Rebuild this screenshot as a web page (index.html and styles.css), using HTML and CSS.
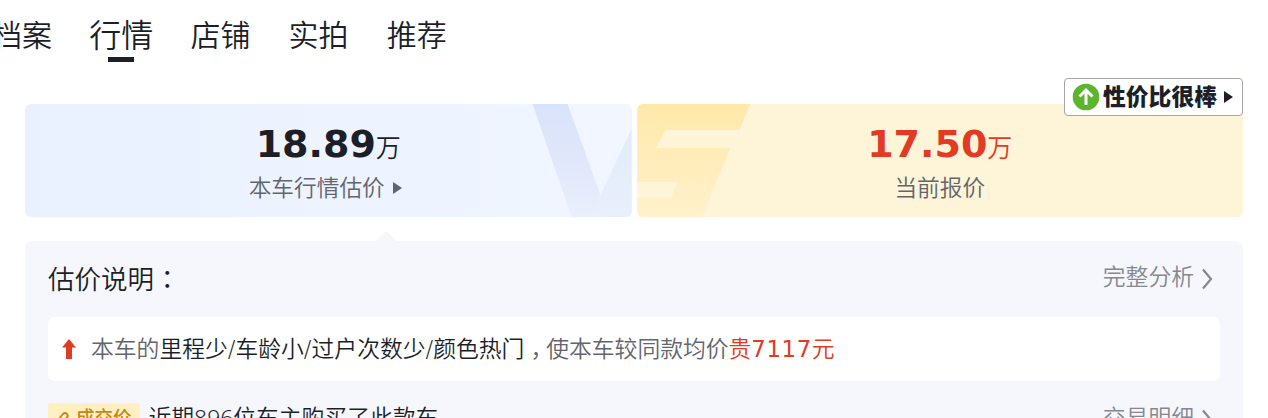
FILE: index.html
```
<!DOCTYPE html>
<html lang="zh-CN">
<head>
    <meta charset="UTF-8">
    <meta name="viewport" content="width=device-width, initial-scale=1.0">
    <title>车辆行情</title>
    <link rel="stylesheet" href="styles.css">
</head>
<body>
    <nav class="tabs">
        <a class="tab">档案</a>
        <a class="tab active">行情</a>
        <a class="tab">店铺</a>
        <a class="tab">实拍</a>
        <a class="tab">推荐</a>
    </nav>

    <div class="price-cards">
        <div class="price-card estimate">
            <svg class="card-bg" viewBox="0 0 607 113">
                <defs>
                    <linearGradient id="blueFade" x1="0" y1="0" x2="0" y2="1">
                        <stop offset="0" stop-color="#d8e3fa"/>
                        <stop offset="0.5" stop-color="#e1e7fa"/>
                        <stop offset="1" stop-color="#e9effc"/>
                    </linearGradient>
                    <linearGradient id="blueFadeSide" x1="0" y1="0" x2="0" y2="1">
                        <stop offset="0" stop-color="#e1ebfa"/>
                        <stop offset="1" stop-color="#e9effc"/>
                    </linearGradient>
                </defs>
                <path d="M508 0H543L576 91L567 113H547Z" fill="url(#blueFade)"/>
                <path d="M576 91L607 25V113H567Z" fill="url(#blueFadeSide)"/>
            </svg>
            <div class="price">18.89<span class="unit">万</span></div>
            <div class="label">本车行情估价<i class="triangle"></i></div>
        </div>
        <div class="price-card offer">
            <svg class="card-bg" viewBox="0 0 606 113">
                <defs>
                    <linearGradient id="yellowFade" x1="0" y1="0" x2="0" y2="1">
                        <stop offset="0" stop-color="#ffe8a9"/>
                        <stop offset="0.6" stop-color="#ffedbd"/>
                        <stop offset="1" stop-color="#fff1cc"/>
                    </linearGradient>
                </defs>
                <path d="M0 0H113L102 26H28L19 44H93L65 113H0V94H34L40 78H0Z" fill="url(#yellowFade)"/>
            </svg>
            <div class="price">17.50<span class="unit">万</span></div>
            <div class="label">当前报价</div>
            <div class="badge">
                <svg width="28" height="28" viewBox="0 0 28 28">
                    <circle cx="14" cy="14" r="13.3" fill="#5db52e"/>
                    <path d="M14 22V8M7.5 13.5L14 7L20.5 13.5" fill="none" stroke="#fff" stroke-width="3"/>
                </svg>
                <span class="badge-text">性价比很棒</span>
                <i class="triangle"></i>
            </div>
        </div>
    </div>

    <section class="panel">
        <div class="panel-header">
            <h3>估价说明<span class="colon" lang="zh-TW">：</span></h3>
            <a class="more">完整分析<svg width="12" height="22" viewBox="0 0 12 22"><path d="M2 1.5L10 11L2 20.5"/></svg></a>
        </div>
        <div class="reason">
            <svg class="up" width="14" height="20" viewBox="0 0 14 20">
                <path d="M7 0L14 8.5H10V20H4V8.5H0Z" fill="#e23a23"/>
            </svg>
            <p>本车的<b>里程少/车龄小/过户次数少/颜色热门</b><span class="comma">，</span>使本车较同款均价<em>贵<span class="num">7117</span>元</em></p>
        </div>
        <div class="deal">
            <span class="tag">
                <svg width="15" height="20" viewBox="0 0 15 20"><path d="M2 14L7 8Q9 6 11 8L12 10L6 17M5 13L9 17" fill="none" stroke="#c08a16" stroke-width="1.8"/></svg>
                成交价
            </span>
            <span class="deal-text">近期896位车主购买了此款车</span>
            <a class="more">交易明细<svg width="12" height="22" viewBox="0 0 12 22"><path d="M2 1.5L10 11L2 20.5"/></svg></a>
        </div>
    </section>
</body>
</html>
```
FILE: styles.css
```
* {
    box-sizing: border-box;
}

body {
    margin: 0;
    height: 418px;
    overflow: hidden;
    background: #fff;
    color: #1c1f28;
    font-family: "Liberation Sans", "Noto Sans CJK SC", sans-serif;
    font-weight: 350;
}

.tabs {
    display: flex;
    align-items: center;
    gap: 38.2px;
    height: 72px;
    margin-left: -8px;
    font-size: 30px;
    line-height: 44px;
}

.tab {
    position: relative;
    white-space: nowrap;
}

.tab.active {
    margin: 0 -1px;
    font-size: 32px;
}

.tab.active::after {
    content: "";
    position: absolute;
    left: 19px;
    top: 43px;
    width: 26px;
    height: 5px;
    background: #1c1f28;
}

.price-cards {
    display: flex;
    gap: 5px;
    margin: 32px 25px 0;
    height: 113px;
}

.price-card {
    position: relative;
    flex: 1;
    padding-top: 16px;
    border-radius: 6px;
    text-align: center;
}

.card-bg {
    position: absolute;
    left: 0;
    top: 0;
    width: 100%;
    height: 100%;
    border-radius: 6px;
}

.estimate {
    background: linear-gradient(90deg, #e9f1ff, #f1f6ff);
}

.offer {
    background: #fef4d8;
}

.price {
    position: relative;
    font: bold 38px/48px "DejaVu Sans", sans-serif;
}

.unit {
    font: 350 25px/30px "Noto Sans CJK SC", sans-serif;
}

.offer .price {
    color: #e23a23;
}

.label {
    position: relative;
    display: flex;
    justify-content: center;
    align-items: center;
    color: #62656d;
    font-size: 22.7px;
    line-height: 40px;
}

.triangle {
    margin-left: 8px;
    border-left: 9px solid currentColor;
    border-top: 6px solid transparent;
    border-bottom: 6px solid transparent;
}

.estimate .label {
    padding-right: 6px;
}

.badge {
    position: absolute;
    right: 0;
    top: -26px;
    display: flex;
    align-items: center;
    width: 179px;
    height: 38px;
    padding-left: 7px;
    border: 1px solid #a3a6ad;
    border-radius: 4px;
    background: #fff;
}

.badge-text {
    margin-left: 3px;
    font-size: 22.8px;
    font-weight: 900;
    line-height: 34px;
    white-space: nowrap;
}

.badge .triangle {
    margin-left: 7px;
}

.panel {
    position: relative;
    height: 177px;
    margin: 24px 25px 0;
    padding: 0 23px;
    border-radius: 8px 8px 0 0;
    background: #f5f7fc;
}

.panel::before {
    content: "";
    position: absolute;
    left: 350px;
    top: -10px;
    border: 11px solid transparent;
    border-top: 0;
    border-bottom: 10px solid #f5f7fc;
}

.panel-header {
    display: flex;
    justify-content: space-between;
    height: 76px;
}

.panel-header h3 {
    margin: 0;
    font-size: 26.5px;
    font-weight: 350;
    line-height: 78px;
}

.colon {
    font-family: "Noto Sans CJK TC", sans-serif;
    line-height: 1;
}

.comma {
    padding-left: 6px;
    margin-right: -7px;
}

.more {
    display: flex;
    align-items: center;
    gap: 7px;
    height: 69px;
    margin-right: 7px;
    color: #85888f;
    font-size: 22.8px;
}

.more svg {
    margin-top: 7px;
    fill: none;
    stroke: #85888f;
    stroke-width: 2.2;
}

.reason {
    display: flex;
    align-items: center;
    height: 64px;
    padding-left: 14px;
    border-radius: 7px;
    background: #fff;
}

.reason p {
    margin: 0 0 0 15px;
    color: #62656d;
    font-family: "DejaVu Sans", "Noto Sans CJK SC", sans-serif;
    font-size: 22.8px;
    line-height: 40px;
    white-space: nowrap;
}

.reason b {
    color: #1c1f28;
    font-weight: 350;
}

.reason em {
    color: #e23a23;
    font-style: normal;
}

.num {
    font-weight: 400;
    letter-spacing: 0.6px;
}

.deal {
    display: flex;
    align-items: center;
    height: 70px;
}

.tag {
    display: flex;
    align-items: center;
    gap: 5px;
    height: 26px;
    padding: 0 8px;
    border-radius: 3px;
    background: #ffefc1;
    color: #c08a16;
    font-size: 18.5px;
    font-weight: 500;
}

.deal-text {
    margin: 3px 0 0 9px;
    font-family: "Noto Sans", "Noto Sans CJK SC", sans-serif;
    font-size: 22.8px;
    line-height: 34px;
}

.deal .more {
    margin-left: auto;
}
```
